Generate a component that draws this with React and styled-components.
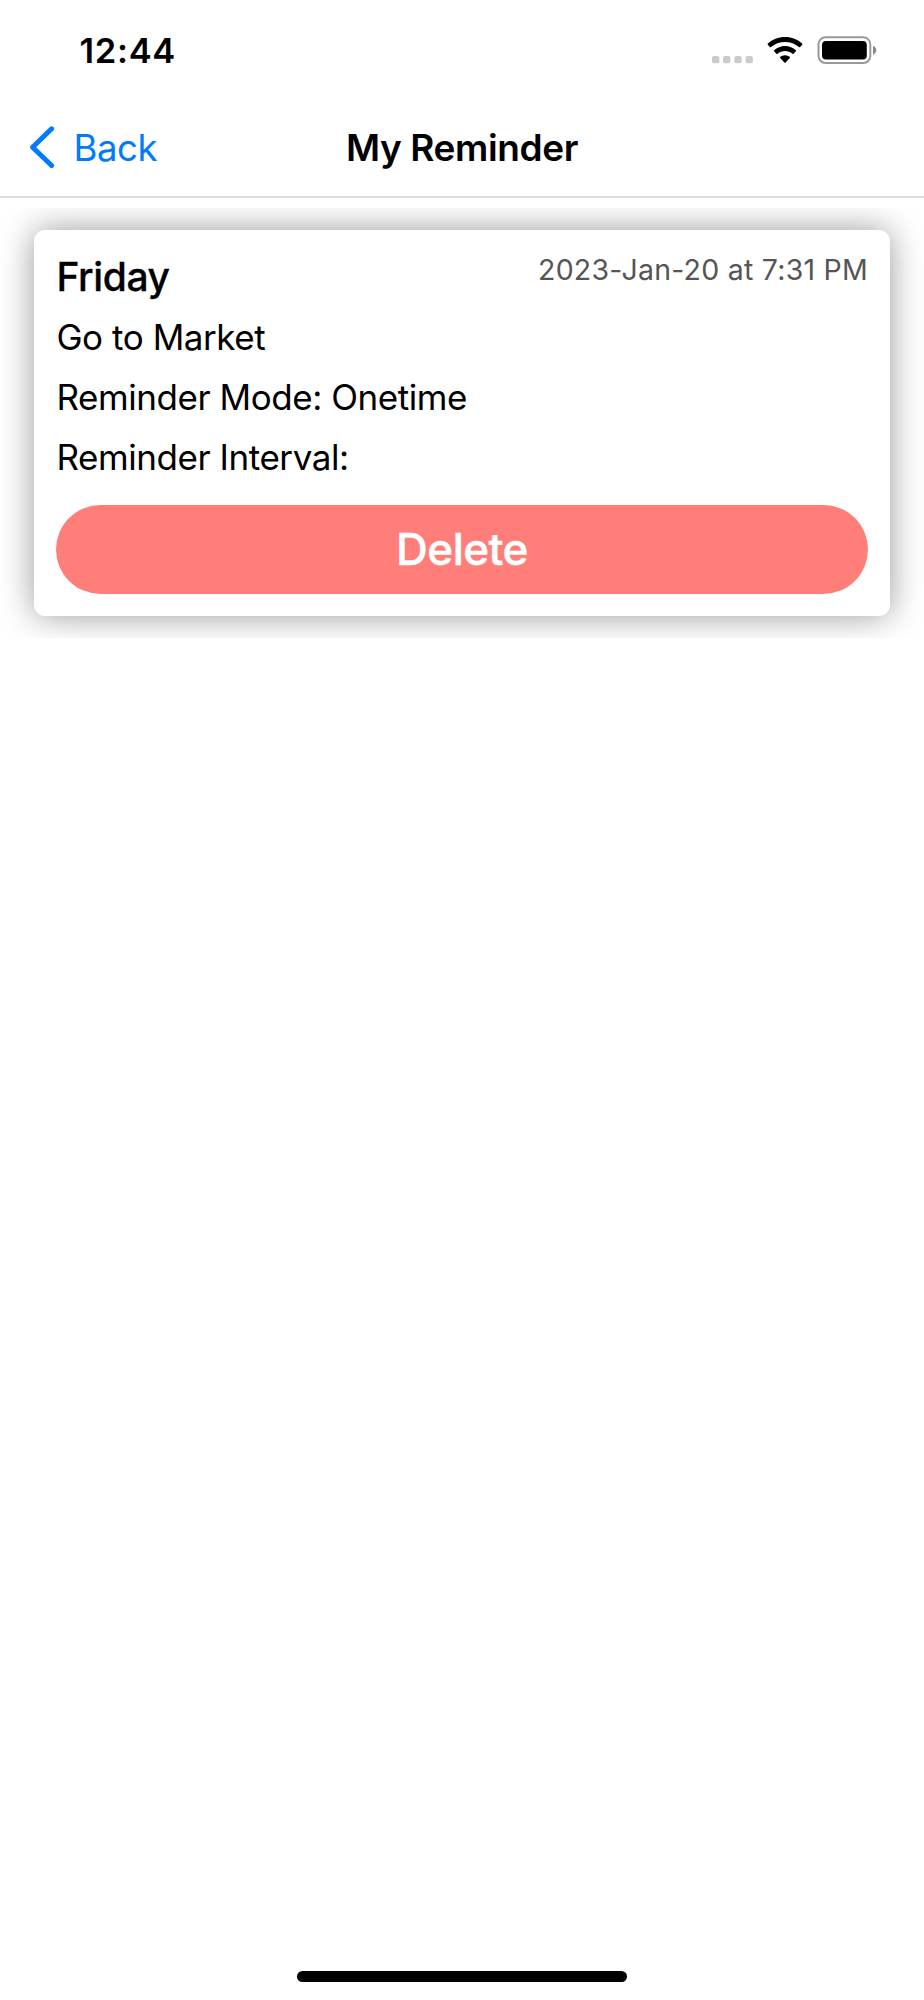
import React from 'react';
import styled, { createGlobalStyle } from 'styled-components';

const GlobalStyle = createGlobalStyle`
* {
    box-sizing: border-box;
}

body {
    margin: 0;
    background: #fff;
    font-family: Inter, "Liberation Sans", sans-serif;
}
`

const Screen = styled.div`
    display: flex;
    flex-direction: column;
    width: 924px;
    height: 2000px;
    background: #fff;
    color: #000;
    overflow: hidden;
`

const StatusBar = styled.div`
    display: flex;
    justify-content: space-between;
    height: 98px;
    padding: 29px 46px 0 79.5px;
`

const Time = styled.span`
    font-size: 34.5px;
    font-weight: 600;
    line-height: 44px;
    letter-spacing: 0.7px;
`

const StatusIcons = styled.svg`
    width: 168px;
    height: 44px;
`

const NavBar = styled.header`
    display: grid;
    grid-template-columns: 1fr auto 1fr;
    align-items: center;
    height: 100px;
    padding: 1px 29px 0;
    border-bottom: 2px solid #dcdcdd;
`

const BackButton = styled.button`
    display: flex;
    align-items: center;
    gap: 18.5px;
    padding: 0;
    border: 0;
    background: none;
    color: #007aff;
    font-family: inherit;
    font-size: 36.5px;
    line-height: 44px;
    letter-spacing: -0.4px;

    svg {
        width: 26px;
        height: 44px;
    }
`

const Title = styled.h1`
    margin: 0;
    font-size: 37px;
    font-weight: 600;
    line-height: 44px;
    letter-spacing: -0.4px;
`

/* clips the card shadow at the row edges */
const ReminderRow = styled.div`
    margin-top: 10px;
    padding: 22px 34px;
    height: 430px;
    overflow: hidden;
`

const Card = styled.div`
    display: flex;
    flex-direction: column;
    height: 386px;
    padding: 22px;
    border-radius: 11px;
    background: #fff;
    box-shadow: 0 0 34px rgba(0, 0, 0, 0.4);
`

const CardTop = styled.div`
    display: flex;
    justify-content: space-between;
    align-items: flex-start;
    height: 55px;
    padding-left: 0.5px;
`

const Day = styled.h2`
    margin: 0;
    font-size: 39px;
    font-weight: 500;
    line-height: 50px;
    letter-spacing: -0.4px;
    -webkit-text-stroke: 0.3px;
`

const DateText = styled.span`
    color: #555;
    font-size: 28.5px;
    line-height: 36px;
    letter-spacing: 0.24px;
`

const Line = styled.p`
    margin: 0;
    height: 60.2px;
    padding-left: 0.4px;
    font-size: 35px;
    line-height: 60px;
    letter-spacing: -0.44px;
    white-space: pre;
`

const DeleteButton = styled.button`
    margin-top: auto;
    height: 89.5px;
    padding: 0;
    border: 0;
    border-radius: 45px;
    background: #ff7e79;
    color: #fff;
    font-family: inherit;
    font-size: 44px;
    font-weight: 500;
    line-height: 89px;
    letter-spacing: -0.5px;
    -webkit-text-stroke: 0.5px;
`

const HomeIndicator = styled.div`
    width: 330px;
    height: 11px;
    margin: auto auto 18px;
    border-radius: 6px;
    background: #000;
`

const reminders = [
    {
        day: 'Friday',
        date: '2023-Jan-20 at 7:31 PM',
        text: 'Go to Market',
        mode: 'Onetime',
        interval: '',
    },
]

const Icons = () => (
    <StatusIcons viewBox="710 29 168 44">
        <g fill="#cbcbcb">
            <rect x="712" y="56" width="7.4" height="7.2" rx="2" />
            <rect x="723" y="56" width="7.4" height="7.2" rx="2" />
            <rect x="734.3" y="56" width="7.4" height="7.2" rx="2" />
            <rect x="745.5" y="56" width="7.4" height="7.2" rx="2" />
        </g>
        <path d="M785 37C778.3 37 772.2 39.5 767.8 43.6Q767.3 44.1 767.8 44.7L769.9 47Q770.5 47.5 771.1 47C774.8 43.7 779.7 41.9 785 41.9S795.2 43.7 798.9 47Q799.5 47.5 800.1 47L802.2 44.7Q802.7 44.1 802.2 43.6C797.8 39.5 791.7 37 785 37Z" />
        <path d="M785 46C780.8 46 777 47.6 774.1 50.3Q773.6 50.8 774.1 51.3L776.4 53.7Q777 54.2 777.6 53.7C779.6 52 782.2 51 785 51S790.4 52 792.4 53.7Q793 54.2 793.6 53.7L795.9 51.3Q796.4 50.8 795.9 50.3C793 47.6 789.2 46 785 46Z" />
        <path d="M785 55.3C783.1 55.3 781.4 56 780.2 57.1Q779.7 57.6 780.2 58.1L784.4 62.6Q785 63.2 785.6 62.6L789.8 58.1Q790.3 57.6 789.8 57.1C788.6 56 786.9 55.3 785 55.3Z" />
        <rect x="818.5" y="37.3" width="51.8" height="25.7" rx="7" fill="none" stroke="#999" strokeWidth="2" />
        <rect x="822" y="41" width="44.8" height="18.5" rx="4" />
        <path d="M873 45.8C875 46.6 876.3 48.3 876.3 50.2S875 53.8 873 54.7Z" fill="#8a8a8a" />
    </StatusIcons>
)

const Reminder = ({ item }) => {
    return (
        <ReminderRow>
            <Card>
                <CardTop>
                    <Day>{item.day}</Day>
                    <DateText>{item.date}</DateText>
                </CardTop>
                <Line>{item.text}</Line>
                <Line>Reminder Mode: {item.mode}</Line>
                <Line>Reminder Interval: {item.interval}</Line>
                <DeleteButton>Delete</DeleteButton>
            </Card>
        </ReminderRow>
    )
}

const App = () => {
    return (
        <Screen>
            <GlobalStyle />
            <StatusBar>
                <Time>12:44</Time>
                <Icons />
            </StatusBar>
            <NavBar>
                <BackButton>
                    <svg viewBox="29 126 26 44" fill="none" stroke="#007aff" strokeWidth="5" strokeLinecap="round" strokeLinejoin="round">
                        <path d="M51.6 128.8L32.6 147.2L51.6 165.5" />
                    </svg>
                    Back
                </BackButton>
                <Title>My Reminder</Title>
            </NavBar>
            {reminders.map((item) => (
                <Reminder key={item.date} item={item} />
            ))}
            <HomeIndicator />
        </Screen>
    )
}

export default App;
